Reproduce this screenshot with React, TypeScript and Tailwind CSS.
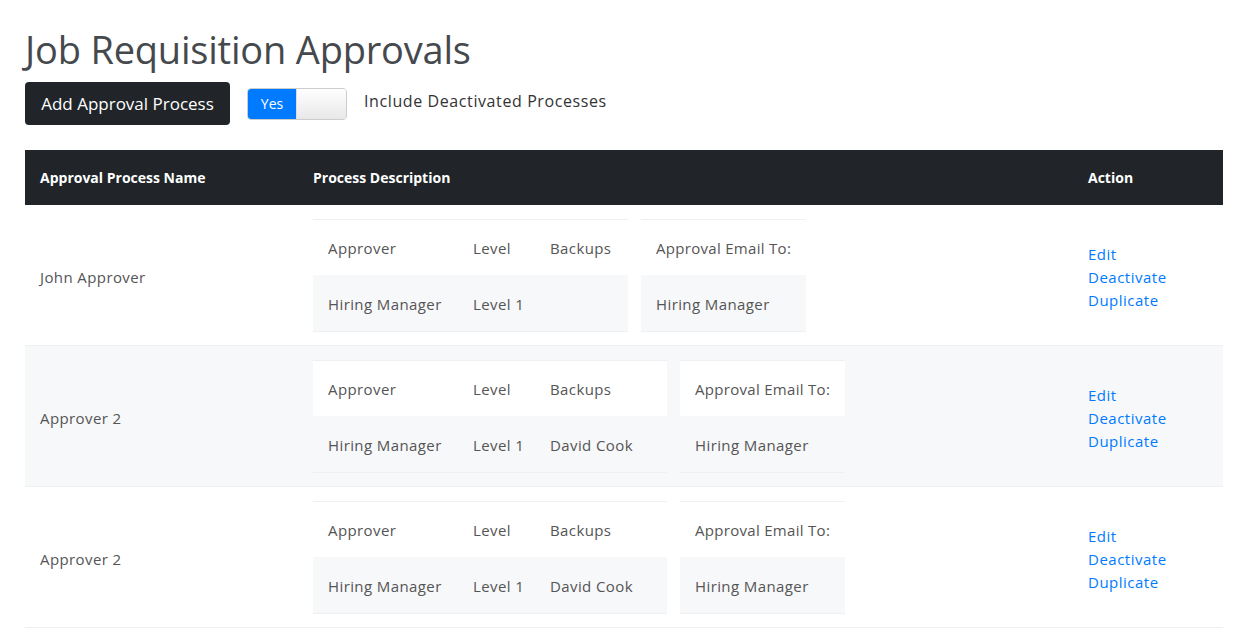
import React from 'react'

type Step = { approver: string; level: string; backups: string }
type Process = {
    name: string
    steps: Step[]
    emailTo: string
    cols: [number, number, number]
    striped: boolean
}

const PROCESSES: Process[] = [
    {
        name: 'John Approver',
        steps: [{ approver: 'Hiring Manager', level: 'Level 1', backups: '' }],
        emailTo: 'Hiring Manager',
        cols: [145, 77, 93],
        striped: false,
    },
    {
        name: 'Approver 2',
        steps: [{ approver: 'Hiring Manager', level: 'Level 1', backups: 'David Cook' }],
        emailTo: 'Hiring Manager',
        cols: [145, 77, 132],
        striped: true,
    },
    {
        name: 'Approver 2',
        steps: [{ approver: 'Hiring Manager', level: 'Level 1', backups: 'David Cook' }],
        emailTo: 'Hiring Manager',
        cols: [145, 77, 132],
        striped: false,
    },
]

function ProcessDescription({ p }: { p: Process }) {
    const [c1, c2, c3] = p.cols
    return (
        <div className="flex gap-[13px]">
            <table className="border-collapse text-[15px] tracking-[0.4px] text-[#555]" style={{ width: c1 + c2 + c3 }}>
                <thead>
                    <tr className="h-[55px] bg-white border-t border-[#eef0f2]">
                        <td className="pl-[15px] pt-[2px]" style={{ width: c1 }}>Approver</td>
                        <td className="pl-[15px] pt-[2px]" style={{ width: c2 }}>Level</td>
                        <td className="pl-[15px] pt-[2px]" style={{ width: c3 }}>Backups</td>
                    </tr>
                </thead>
                <tbody>
                    {p.steps.map((s, i) => (
                        <tr key={i} className="h-[57px] bg-[#f7f8fa] border-b border-[#eef0f2]">
                            <td className="pl-[15px] pt-[2px]">{s.approver}</td>
                            <td className="pl-[15px] pt-[2px]">{s.level}</td>
                            <td className="pl-[15px] pt-[2px]">{s.backups}</td>
                        </tr>
                    ))}
                </tbody>
            </table>
            <table className="border-collapse text-[15px] tracking-[0.3px] text-[#555] w-[165px]">
                <thead>
                    <tr className="h-[55px] bg-white border-t border-[#eef0f2]">
                        <td className="pl-[15px] pt-[2px] whitespace-nowrap">Approval Email To:</td>
                    </tr>
                </thead>
                <tbody>
                    <tr className="h-[57px] bg-[#f7f8fa] border-b border-[#eef0f2]">
                        <td className="pl-[15px] pt-[2px] tracking-[0.4px]">{p.emailTo}</td>
                    </tr>
                </tbody>
            </table>
        </div>
    )
}

export default function App() {
    return (
        <div className="min-h-screen bg-white pl-[25px] pr-[13px] pt-[26px] font-['Open_Sans',sans-serif] text-[#555]">
            <h1 className="text-[38px] leading-[46px] text-[#45494d] tracking-[-0.2px]">Job Requisition Approvals</h1>
            <div className="mt-[10px] flex items-center">
                <button className="h-[43px] w-[205px] rounded-[4px] bg-[#212529] text-[17px] text-white">
                    Add Approval Process
                </button>
                <div className="ml-[17px] flex h-[32px] w-[100px] overflow-hidden rounded-[4px] border border-[#ccc]">
                    <span className="flex w-[48px] items-center justify-center bg-[#007bff] text-[14px] text-white">Yes</span>
                    <span className="flex-1 bg-gradient-to-b from-white to-[#e8e8e8] border-l border-[#ddd]" />
                </div>
                <span className="ml-[17px] -mt-[6px] text-[16px] tracking-[0.6px] text-[#333]">Include Deactivated Processes</span>
            </div>

            <table className="mt-[25px] w-full border-collapse">
                <thead>
                    <tr className="h-[55px] bg-[#212529] text-left text-[14px] font-bold text-white">
                        <th className="w-[288px] pl-[15px]">Approval Process Name</th>
                        <th className="pl-0">Process Description</th>
                        <th className="w-[135px] pl-0">Action</th>
                    </tr>
                </thead>
                <tbody>
                    {PROCESSES.map((p, i) => (
                        <tr key={i} className={(p.striped ? 'bg-[#f7f8fa]' : 'bg-white') + ' border-b border-[#eef0f2]'}>
                            <td className="pl-[15px] pt-[5px] text-[15px] tracking-[0.4px] text-[#555]">{p.name}</td>
                            <td className="pt-[14px] pb-[13px]">
                                <ProcessDescription p={p} />
                            </td>
                            <td className="pt-[5px] text-[15px] leading-[23px] tracking-[0.5px] text-[#007bff]">
                                <a className="block" href="#">Edit</a>
                                <a className="block" href="#">Deactivate</a>
                                <a className="block" href="#">Duplicate</a>
                            </td>
                        </tr>
                    ))}
                </tbody>
            </table>
        </div>
    )
}
